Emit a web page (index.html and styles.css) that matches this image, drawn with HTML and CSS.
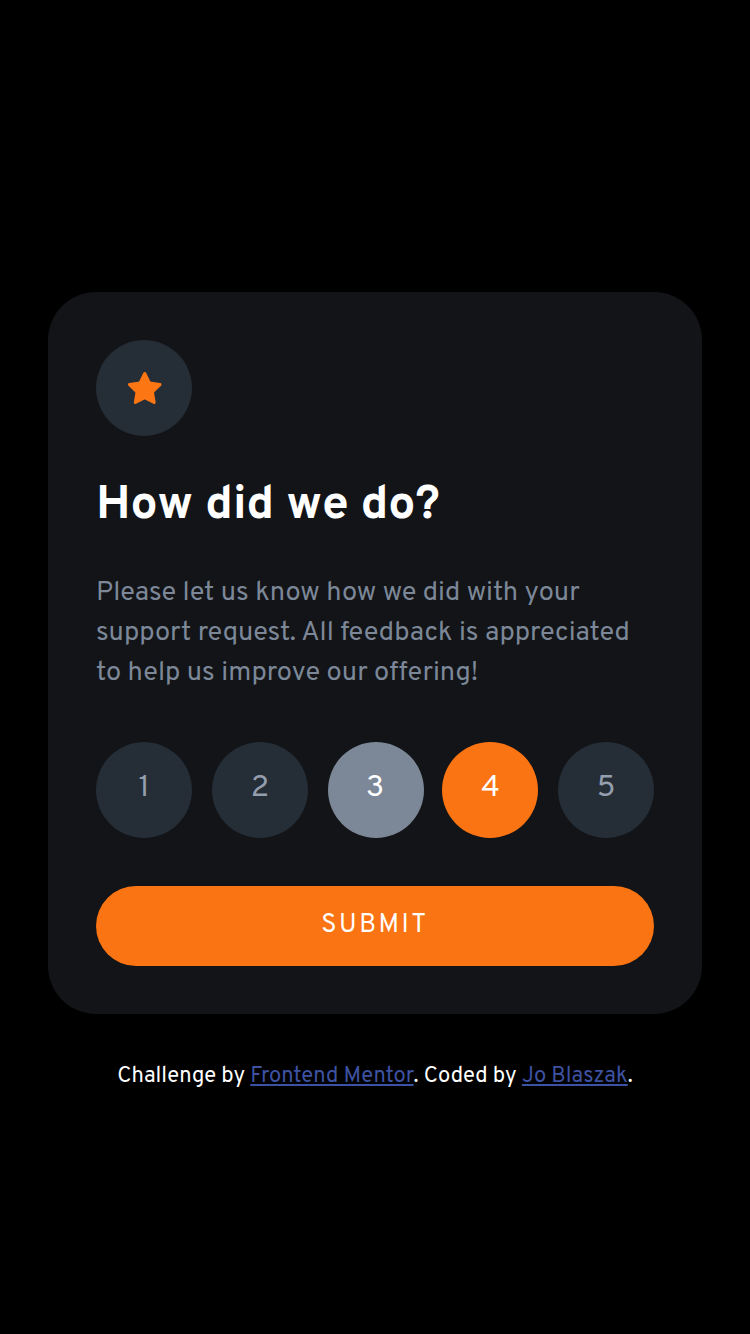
FILE: index.html
```html
<!DOCTYPE html>
<html lang="en">
<head>
<meta charset="utf-8">
<title>Interactive rating component</title>
<link rel="stylesheet" href="styles.css">
</head>
<body>
<main class="card">
  <div class="star"><svg width="34" height="32" viewBox="0 0 17 16"><path d="m9.067.43 1.99 4.031c.112.228.33.386.58.422l4.45.647a.772.772 0 0 1 .427 1.316l-3.22 3.138a.773.773 0 0 0-.222.683l.76 4.431a.772.772 0 0 1-1.12.813l-3.98-2.092a.773.773 0 0 0-.718 0l-3.98 2.092a.772.772 0 0 1-1.119-.813l.76-4.431a.77.77 0 0 0-.222-.683L.233 6.846A.772.772 0 0 1 .661 5.53l4.449-.647a.772.772 0 0 0 .58-.422L7.68.43a.774.774 0 0 1 1.387 0Z" fill="#FC7614"/></svg></div>
  <h1 class="title">How did we do?</h1>
  <p class="copy"><span class="line">Please let us know how we did with your</span><span class="line">support request. All feedback is appreciated</span><span class="line">to help us improve our offering!</span></p>
  <div class="ratings">
    <button class="rating">1</button>
    <button class="rating">2</button>
    <button class="rating hovered">3</button>
    <button class="rating selected">4</button>
    <button class="rating">5</button>
  </div>
  <button class="submit">SUBMIT</button>
</main>
<footer class="attribution">Challenge by <a href="#">Frontend Mentor</a>. Coded by <a href="#">Jo Blaszak</a>.</footer>
</body>
</html>
```
FILE: styles.css
```css
* { box-sizing: border-box; }
body {
  margin: 0;
  height: 1334px;
  padding: 292px 48px 0;
  background: #000;
  color: #fff;
  font-family: Overpass, "Noto Sans", sans-serif;
}
.card {
  height: 722px;
  padding: 48px;
  border-radius: 48px;
  background: #121417;
}
.star, .rating {
  display: flex;
  align-items: center;
  justify-content: center;
  width: 96px;
  height: 96px;
  border-radius: 50%;
  background: #252d37;
}
.star { padding-left: 2px; }
.title {
  margin: 40px 0 0;
  height: 60px;
  font-size: 48px;
  line-height: 60px;
  font-weight: 700;
  white-space: nowrap;
}
.copy {
  margin: 37px 0 0;
  height: 120px;
  font-size: 27.2px;
  line-height: 40px;
  color: #7c8798;
}
.line { display: block; white-space: nowrap; }
.ratings {
  display: grid;
  grid-template-columns: 96px 96px 96px 94px 96px;
  column-gap: 20px;
  margin-top: 49px;
}
.rating {
  border: 0;
  padding: 0 0 2px;
  font: 30px/40px Overpass, "Noto Sans", sans-serif;
  color: #959eac;
}
.hovered { background: #7c8798; color: #fff; padding-right: 2px; }
.selected { background: #fb7413; color: #fff; margin-left: -2px; padding-left: 1px; }
.submit {
  display: block;
  width: 100%;
  height: 80px;
  margin-top: 48px;
  padding: 0;
  border: 0;
  border-radius: 40px;
  background: #fb7413;
  color: #fff;
  font: 25.6px/40px Overpass, "Noto Sans", sans-serif;
  letter-spacing: 2.56px;
}
.attribution {
  margin-top: 48px;
  font-size: 22px;
  line-height: 30px;
  text-align: center;
  white-space: nowrap;
}
.attribution a { color: #3e52a3; }
```
